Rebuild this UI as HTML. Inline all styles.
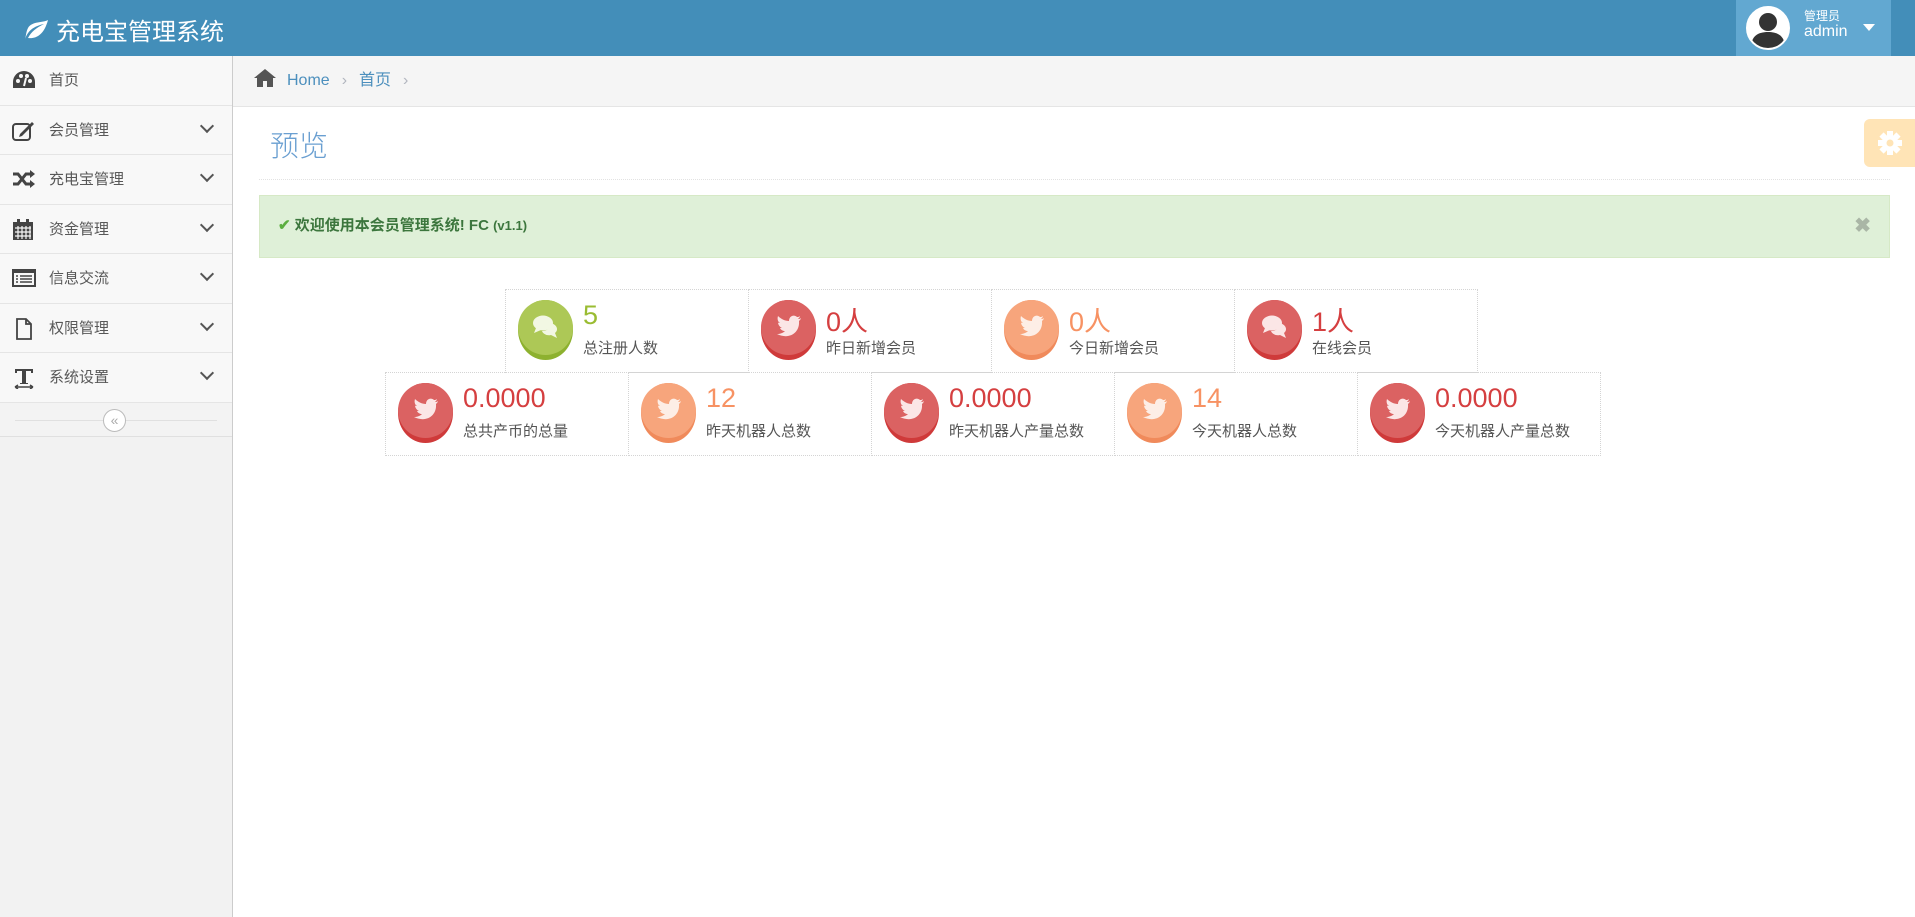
<!DOCTYPE html>
<html><head><meta charset="utf-8"><style>
*{box-sizing:border-box;margin:0;padding:0}
body{width:1915px;height:917px;overflow:hidden;font-family:"Liberation Sans","Noto Sans CJK SC",sans-serif;background:#fff;position:relative;color:#393939}
.hd{position:absolute;left:0;top:0;width:1915px;height:56px;background:#438eb9}
.logo{position:absolute;left:22px;top:12px;color:#fff;font-size:24px;display:flex;align-items:center;gap:6px}
.user{position:absolute;left:1736px;top:0;width:155px;height:56px;background:#62a8d1}
.av{position:absolute;left:10px;top:6px;width:44px;height:44px;border-radius:50%;background:#fff;border:2px solid #fff;overflow:hidden}
.un{position:absolute;left:68px;top:9px;color:#fff;font-size:12px;line-height:14px}
.un b{font-size:16px;font-weight:normal;display:block;margin-top:2px}
.car{position:absolute;left:127px;top:24px;border:6px solid transparent;border-top:7px solid #fff}
.sb{position:absolute;left:0;top:56px;width:233px;height:861px;background:#f2f2f2;border-right:1px solid #ccc}
.it{height:49.5px;background:#f8f8f8;border-bottom:1px solid #e5e5e5;position:relative;font-size:15px;color:#585858;line-height:49px;padding-left:49px}
.it svg{position:absolute;left:12px;top:14px}
.it .ch{position:absolute;left:202px;width:10px;height:10px;border-right:2px solid #555;border-bottom:2px solid #555;transform:rotate(45deg);top:15px}
.col{height:34px;position:relative;border-bottom:1px solid #e0e0e0;background:#f3f3f3}
.col:before{content:"";position:absolute;left:15px;right:15px;top:17px;border-top:1px solid #e0e0e0}
.col span{position:absolute;left:103px;top:6px;width:23px;height:23px;border-radius:50%;border:1px solid #bbb;background:#fff;font-size:14px;color:#aaa;text-align:center;line-height:20px}
.bc{position:absolute;left:233px;top:56px;width:1682px;height:51px;background:#f5f5f5;border-bottom:1px solid #e5e5e5;font-size:16px;color:#4c8fbd;line-height:50px;padding-left:20px}
.bc span{color:#b2b6bf;margin:0 12px}
.ttl{position:absolute;left:270px;top:123px;font-size:29px;color:#6a9fd1;font-weight:300}
.hr{position:absolute;left:259px;top:179px;width:1631px;border-top:1px dotted #e2e2e2}
.gear{position:absolute;left:1864px;top:119px;width:51px;height:48px;background:#ffe4b6;border-radius:6px 0 0 6px}
.al{position:absolute;left:259px;top:195px;width:1631px;height:63px;background:#dff0d8;border:1px solid #d6e9c6;color:#3c763d;font-size:15px;line-height:60px;padding-left:18px}
.al small{font-size:13px;font-weight:bold}
.x{position:absolute;right:18px;top:0;color:#aab6a6;font-weight:bold;font-size:20px}
.row{position:absolute;display:flex}
.bx{width:244px;height:84px;border:1px dotted #d4d4d4;margin-right:-1px;position:relative}
.ic{position:absolute;left:12px;top:10px;width:55px;height:60px;border-radius:50%}
.ic:after{content:"";position:absolute;left:0;right:0;top:0;height:55px;border-radius:50%}
.ic svg{position:absolute;left:14px;top:13px;z-index:2}
.num{position:absolute;left:77px;top:10px;font-size:27px}
.lb{position:absolute;left:77px;top:47px;font-size:15px;color:#555}
.g{background:#8db12f}.g:after{background:#adc856}
.r{background:#cf3a3a}.r:after{background:#db6262}
.o{background:#f08a5b}.o:after{background:#f7a57c}
</style></head><body>
<div class="hd">
 <div class="logo"><svg width="28" height="22" viewBox="0 0 28 22"><path d="M3 21C5 12 12 7 22 5C14 9 9 13 6 19C14 20 22 16 26 1C21 4 10 2 6 9C4 13 4 17 3 21Z" fill="#fff"/></svg>充电宝管理系统</div>
 <div class="user"><div class="av"><svg width="40" height="40" viewBox="0 0 40 40"><circle cx="20" cy="14" r="9" fill="#333"/><path d="M3 40C3 28 10 24 20 24C30 24 37 28 37 40Z" fill="#333"/></svg></div><div class="un">管理员<b>admin</b></div><div class="car"></div></div>
</div>
<div class="sb">
 <div class="it"><svg width="24" height="20" viewBox="0 0 24 20"><path d="M12 1A11 11 0 0 0 1 12V18H23V12A11 11 0 0 0 12 1Z" fill="#444"/><circle cx="6" cy="11" r="2" fill="#f8f8f8"/><circle cx="9" cy="6" r="2" fill="#f8f8f8"/><circle cx="15" cy="6" r="2" fill="#f8f8f8"/><circle cx="18" cy="11" r="2" fill="#f8f8f8"/><path d="M12 16L14 8" stroke="#f8f8f8" stroke-width="2"/></svg>首页</div>
 <div class="it"><svg width="24" height="22" viewBox="0 0 24 22"><rect x="1" y="4" width="17" height="16" rx="3" fill="none" stroke="#444" stroke-width="2"/><path d="M8 14L20 2L22 4L10 16L7 17Z" fill="#444"/></svg>会员管理<i class="ch"></i></div>
 <div class="it"><svg width="24" height="20" viewBox="0 0 24 20"><path d="M1 5H6L14 15H19M1 15H6L14 5H19" fill="none" stroke="#444" stroke-width="3"/><path d="M18 1L23 5L18 9ZM18 11L23 15L18 19Z" fill="#444"/></svg>充电宝管理<i class="ch"></i></div>
 <div class="it"><svg width="22" height="22" viewBox="0 0 22 22"><rect x="1" y="3" width="20" height="18" fill="#444"/><path d="M3 9H19M3 13H19M3 17H19M6 7V20M10 7V20M14 7V20M18 7V20" stroke="#f8f8f8" stroke-width="1.2"/><rect x="5" y="0" width="3" height="5" fill="#444"/><rect x="14" y="0" width="3" height="5" fill="#444"/></svg>资金管理<i class="ch"></i></div>
 <div class="it"><svg width="24" height="20" viewBox="0 0 24 20"><rect x="1" y="2" width="22" height="16" fill="none" stroke="#444" stroke-width="2"/><rect x="1" y="2" width="22" height="3" fill="#444"/><path d="M4 8H6M8 8H20M4 11H6M8 11H20M4 14H6M8 14H20" stroke="#444" stroke-width="1.5"/></svg>信息交流<i class="ch"></i></div>
 <div class="it"><svg width="24" height="22" viewBox="0 0 24 22"><path d="M5 1H14L19 6V21H5Z" fill="none" stroke="#444" stroke-width="1.8"/><path d="M14 1V6H19" fill="none" stroke="#444" stroke-width="1.8"/></svg>权限管理<i class="ch"></i></div>
 <div class="it"><svg width="24" height="22" viewBox="0 0 24 22"><path d="M3 2H21V6H19V4H14V16H16V17H8V16H10V4H5V6H3Z" fill="#444"/><path d="M3 20H21M3 20L6 18M3 20L6 22M21 20L18 18M21 20L18 22" stroke="#444" stroke-width="1.5" fill="none"/></svg>系统设置<i class="ch"></i></div>
 <div class="col"><span>«</span></div>
</div>
<div class="bc"><svg width="24" height="20" viewBox="0 0 24 20" style="vertical-align:-3px;margin-right:10px"><path d="M12 1L1 10H4V19H10V13H14V19H20V10H23Z" fill="#555"/></svg>Home<span>›</span>首页<span>›</span></div>
<div class="ttl">预览</div>
<div class="hr"></div>
<div class="gear"><svg width="26" height="26" viewBox="0 0 26 26" style="position:absolute;left:13px;top:11px"><g fill="#fff"><circle cx="13" cy="13" r="8"/><rect x="10" y="1" width="6" height="24"/><rect x="1" y="10" width="24" height="6"/><rect x="10" y="1" width="6" height="24" transform="rotate(45 13 13)"/><rect x="10" y="1" width="6" height="24" transform="rotate(-45 13 13)"/></g><circle cx="13" cy="13" r="3.5" fill="#ffe4b6"/></svg></div>
<div class="al"><b style="color:#5cae40">✔</b> <b>欢迎使用本会员管理系统! FC</b> <small>(v1.1)</small><span class="x">✖</span></div>

<div class="row" style="left:505px;top:289px">
 <div class="bx"><div class="ic g"><svg width="28" height="28" viewBox="0 0 28 28"><ellipse cx="11" cy="10" rx="10" ry="7.5" fill="#f2f7e3"/><path d="M4 15L2 20L9 17Z" fill="#f2f7e3"/><path d="M18 10C25 11 27 17 23 20L25 25L19 22C15 23 11 21 10 18C15 18 19 15 18 10Z" fill="#f2f7e3"/></svg></div><div class="num" style="color:#9abc32">5</div><div class="lb">总注册人数</div></div>
 <div class="bx"><div class="ic r"><svg width="28" height="28" viewBox="0 0 28 28"><path d="M26 5C25 6 24 6 23 6C24 5 25 4 25 3C24 4 23 4 22 4C19 1 14 3 14 8C10 8 6 6 3 3C2 6 3 9 5 10C4 10 3 10 3 9C3 12 5 14 7 15C6 15 5 15 5 15C6 17 8 18 10 18C8 20 5 21 2 21C14 27 25 20 24 8C25 7 26 6 26 5Z" fill="#fbe6e6"/></svg></div><div class="num" style="color:#d53f40">0人</div><div class="lb">昨日新增会员</div></div>
 <div class="bx"><div class="ic o"><svg width="28" height="28" viewBox="0 0 28 28"><path d="M26 5C25 6 24 6 23 6C24 5 25 4 25 3C24 4 23 4 22 4C19 1 14 3 14 8C10 8 6 6 3 3C2 6 3 9 5 10C4 10 3 10 3 9C3 12 5 14 7 15C6 15 5 15 5 15C6 17 8 18 10 18C8 20 5 21 2 21C14 27 25 20 24 8C25 7 26 6 26 5Z" fill="#fdeee6"/></svg></div><div class="num" style="color:#f79263">0人</div><div class="lb">今日新增会员</div></div>
 <div class="bx"><div class="ic r"><svg width="28" height="28" viewBox="0 0 28 28"><ellipse cx="11" cy="10" rx="10" ry="7.5" fill="#fbe6e6"/><path d="M4 15L2 20L9 17Z" fill="#fbe6e6"/><path d="M18 10C25 11 27 17 23 20L25 25L19 22C15 23 11 21 10 18C15 18 19 15 18 10Z" fill="#fbe6e6"/></svg></div><div class="num" style="color:#d53f40">1人</div><div class="lb">在线会员</div></div>
</div>
<div class="row" style="left:385px;top:372px">
 <div class="bx"><div class="ic r"><svg width="28" height="28" viewBox="0 0 28 28"><path d="M26 5C25 6 24 6 23 6C24 5 25 4 25 3C24 4 23 4 22 4C19 1 14 3 14 8C10 8 6 6 3 3C2 6 3 9 5 10C4 10 3 10 3 9C3 12 5 14 7 15C6 15 5 15 5 15C6 17 8 18 10 18C8 20 5 21 2 21C14 27 25 20 24 8C25 7 26 6 26 5Z" fill="#fbe6e6"/></svg></div><div class="num" style="color:#d53f40">0.0000</div><div class="lb">总共产币的总量</div></div>
 <div class="bx"><div class="ic o"><svg width="28" height="28" viewBox="0 0 28 28"><path d="M26 5C25 6 24 6 23 6C24 5 25 4 25 3C24 4 23 4 22 4C19 1 14 3 14 8C10 8 6 6 3 3C2 6 3 9 5 10C4 10 3 10 3 9C3 12 5 14 7 15C6 15 5 15 5 15C6 17 8 18 10 18C8 20 5 21 2 21C14 27 25 20 24 8C25 7 26 6 26 5Z" fill="#fdeee6"/></svg></div><div class="num" style="color:#f79263">12</div><div class="lb">昨天机器人总数</div></div>
 <div class="bx"><div class="ic r"><svg width="28" height="28" viewBox="0 0 28 28"><path d="M26 5C25 6 24 6 23 6C24 5 25 4 25 3C24 4 23 4 22 4C19 1 14 3 14 8C10 8 6 6 3 3C2 6 3 9 5 10C4 10 3 10 3 9C3 12 5 14 7 15C6 15 5 15 5 15C6 17 8 18 10 18C8 20 5 21 2 21C14 27 25 20 24 8C25 7 26 6 26 5Z" fill="#fbe6e6"/></svg></div><div class="num" style="color:#d53f40">0.0000</div><div class="lb">昨天机器人产量总数</div></div>
 <div class="bx"><div class="ic o"><svg width="28" height="28" viewBox="0 0 28 28"><path d="M26 5C25 6 24 6 23 6C24 5 25 4 25 3C24 4 23 4 22 4C19 1 14 3 14 8C10 8 6 6 3 3C2 6 3 9 5 10C4 10 3 10 3 9C3 12 5 14 7 15C6 15 5 15 5 15C6 17 8 18 10 18C8 20 5 21 2 21C14 27 25 20 24 8C25 7 26 6 26 5Z" fill="#fdeee6"/></svg></div><div class="num" style="color:#f79263">14</div><div class="lb">今天机器人总数</div></div>
 <div class="bx"><div class="ic r"><svg width="28" height="28" viewBox="0 0 28 28"><path d="M26 5C25 6 24 6 23 6C24 5 25 4 25 3C24 4 23 4 22 4C19 1 14 3 14 8C10 8 6 6 3 3C2 6 3 9 5 10C4 10 3 10 3 9C3 12 5 14 7 15C6 15 5 15 5 15C6 17 8 18 10 18C8 20 5 21 2 21C14 27 25 20 24 8C25 7 26 6 26 5Z" fill="#fbe6e6"/></svg></div><div class="num" style="color:#d53f40">0.0000</div><div class="lb">今天机器人产量总数</div></div>
</div>
</body></html>
